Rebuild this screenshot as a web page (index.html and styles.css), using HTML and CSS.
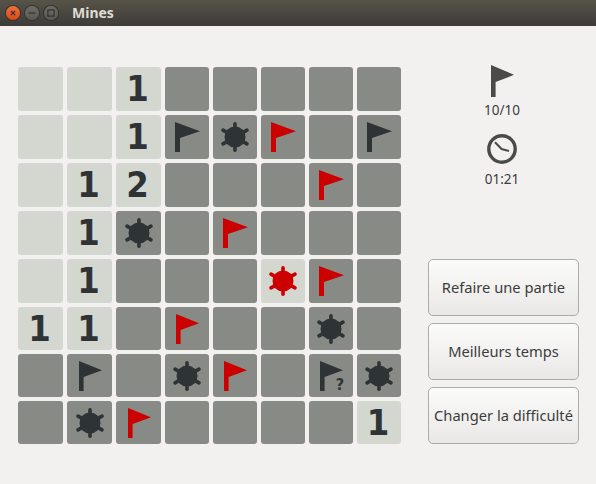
FILE: index.html
```html
<!DOCTYPE html>
<html lang="fr">
<head>
<meta charset="utf-8">
<title>Mines</title>
<link rel="stylesheet" href="styles.css">
</head>
<body>
<svg class="defs" width="0" height="0" aria-hidden="true">
  <symbol id="flag" viewBox="0 0 25 30" preserveAspectRatio="none"><path d="M0 0 L25 9.2 L5 16 L5 30 L0 30 Z"/></symbol>
  <symbol id="mine" viewBox="-15 -15 30 30">
    <circle r="10.5"/>
    <g class="spikes">
      <path d="M0 -13.2 V13.2"/><path d="M-12 -6.9 L12 6.9"/><path d="M-12 6.9 L12 -6.9"/>
    </g>
  </symbol>
</svg>
<header class="titlebar">
  <span class="wb wb-close"><svg viewBox="0 0 16 16"><path d="M5.5 5.5 L10.5 10.5 M10.5 5.5 L5.5 10.5"/></svg></span>
  <span class="wb"><svg viewBox="0 0 16 16"><path d="M4 8 H12"/></svg></span>
  <span class="wb"><svg viewBox="0 0 16 16"><rect x="4.5" y="4.5" width="7" height="7"/></svg></span>
  <span class="title">Mines</span>
</header>
<main class="content">
  <section class="board">
    <div class="cell open"></div><div class="cell open"></div><div class="cell open">1</div><div class="cell"></div><div class="cell"></div><div class="cell"></div><div class="cell"></div><div class="cell"></div>

    <div class="cell open"></div><div class="cell open"></div><div class="cell open">1</div>
    <div class="cell"><svg class="ic-flag"><use href="#flag"/></svg></div>
    <div class="cell"><svg class="ic-mine"><use href="#mine"/></svg></div>
    <div class="cell red"><svg class="ic-flag"><use href="#flag"/></svg></div>
    <div class="cell"></div>
    <div class="cell"><svg class="ic-flag"><use href="#flag"/></svg></div>

    <div class="cell open"></div><div class="cell open">1</div><div class="cell open">2</div><div class="cell"></div><div class="cell"></div><div class="cell"></div>
    <div class="cell red"><svg class="ic-flag"><use href="#flag"/></svg></div>
    <div class="cell"></div>

    <div class="cell open"></div><div class="cell open">1</div>
    <div class="cell"><svg class="ic-mine"><use href="#mine"/></svg></div>
    <div class="cell"></div>
    <div class="cell red"><svg class="ic-flag"><use href="#flag"/></svg></div>
    <div class="cell"></div><div class="cell"></div><div class="cell"></div>

    <div class="cell open"></div><div class="cell open">1</div><div class="cell"></div><div class="cell"></div><div class="cell"></div>
    <div class="cell open red"><svg class="ic-mine"><use href="#mine"/></svg></div>
    <div class="cell red"><svg class="ic-flag"><use href="#flag"/></svg></div>
    <div class="cell"></div>

    <div class="cell open">1</div><div class="cell open">1</div><div class="cell"></div>
    <div class="cell red"><svg class="ic-flag small"><use href="#flag"/></svg></div>
    <div class="cell"></div><div class="cell"></div>
    <div class="cell"><svg class="ic-mine"><use href="#mine"/></svg></div>
    <div class="cell"></div>

    <div class="cell"></div>
    <div class="cell"><svg class="ic-flag small"><use href="#flag"/></svg></div>
    <div class="cell"></div>
    <div class="cell"><svg class="ic-mine"><use href="#mine"/></svg></div>
    <div class="cell red"><svg class="ic-flag small"><use href="#flag"/></svg></div>
    <div class="cell"></div>
    <div class="cell"><svg class="ic-flag small"><use href="#flag"/></svg><span class="maybe">?</span></div>
    <div class="cell"><svg class="ic-mine"><use href="#mine"/></svg></div>

    <div class="cell"></div>
    <div class="cell"><svg class="ic-mine"><use href="#mine"/></svg></div>
    <div class="cell red"><svg class="ic-flag small"><use href="#flag"/></svg></div>
    <div class="cell"></div><div class="cell"></div><div class="cell"></div><div class="cell"></div>
    <div class="cell open">1</div>
  </section>
  <aside class="side">
    <div class="stats">
      <svg class="stat-flag"><use href="#flag"/></svg>
      <div class="stat-text">10/10</div>
      <svg class="stat-clock" viewBox="0 0 30 30">
        <circle cx="15" cy="15" r="13.2"/>
        <path d="M8 8.3 L14.6 15 L22 17"/>
      </svg>
      <div class="stat-text">01:21</div>
    </div>
    <div class="actions">
      <button class="btn">Refaire une partie</button>
      <button class="btn">Meilleurs temps</button>
      <button class="btn">Changer la difficulté</button>
    </div>
  </aside>
</main>
</body>
</html>
```
FILE: styles.css
```css
html, body {
  margin: 0;
  padding: 0;
  height: 100%;
}
body {
  background: #f2f1ef;
  font-family: "Noto Sans", "Liberation Sans", sans-serif;
  overflow: hidden;
}
.defs {
  position: absolute;
}
.titlebar {
  height: 26px;
  box-sizing: border-box;
  display: flex;
  align-items: center;
  padding: 0 0 1px 6px;
  gap: 5px;
  background: linear-gradient(#575349, #3c3b36);
}
.wb {
  width: 14px;
  height: 14px;
  border-radius: 50%;
  background: linear-gradient(#6e6c66, #5b5954);
  box-shadow: 0 0 0 1px #35332f;
  display: block;
}
.wb svg {
  display: block;
  width: 14px;
  height: 14px;
  fill: none;
  stroke: #2f2e2a;
  stroke-width: 1.3;
}
.wb-close {
  background: linear-gradient(#f0703f, #dd4814);
}
.title {
  margin-left: 9px;
  font: bold 14px "Noto Sans", sans-serif;
  color: #dfdbd2;
}
.content {
  display: flex;
  gap: 27px;
  padding: 41px 17px 0 18px;
}
.board {
  display: grid;
  grid-template-columns: repeat(3, 45px) repeat(5, 44px);
  grid-template-rows: repeat(5, 44px) repeat(3, 43px);
  gap: 4px;
  flex: none;
}
.cell {
  position: relative;
  background: #888a85;
  border-radius: 3px;
  color: #2e3436;
  fill: #2e3436;
  stroke: #2e3436;
  font-family: "DejaVu Sans", sans-serif;
  font-weight: bold;
  font-size: 36px;
  font-stretch: condensed;
  line-height: 44px;
  display: flex;
  align-items: center;
  justify-content: center;
}
.open {
  background: #d3d7cf;
  padding-right: 2px;
}
.open.red {
  padding-right: 0;
}
.red {
  fill: #cc0000;
  stroke: #cc0000;
}
.ic-flag {
  width: 25px;
  height: 30px;
  stroke: none;
  margin-left: 1px;
}
.ic-flag.small {
  width: 23px;
}
.ic-mine {
  width: 30px;
  height: 30px;
}
.spikes path {
  stroke-width: 3.6;
  stroke-linecap: round;
  fill: none;
}
#mine circle {
  stroke: none;
}
.maybe {
  position: absolute;
  right: 9px;
  bottom: 4px;
  font: bold 16px/16px "DejaVu Sans", sans-serif;
  font-stretch: condensed;
}
.side {
  width: 151px;
  height: 377px;
  display: flex;
  flex-direction: column;
  justify-content: space-between;
}
.stats {
  display: flex;
  flex-direction: column;
  align-items: center;
  padding-right: 3px;
}
.stat-flag {
  width: 23px;
  height: 32px;
  margin-top: -2px;
  fill: #4a4a48;
}
.stat-text {
  font-size: 13.5px;
  line-height: 18px;
  color: #3c3c3c;
  margin-top: 4px;
}
.stat-clock {
  width: 30px;
  height: 30px;
  margin-top: 15px;
  fill: none;
  stroke: #4a4a48;
  stroke-width: 3.4;
}
.stat-clock path {
  stroke-width: 2;
}
.stat-clock + .stat-text {
  margin-top: 6px;
}
.actions {
  display: flex;
  flex-direction: column;
  gap: 7px;
}
.btn {
  height: 57px;
  width: 151px;
  padding: 0 0 2px;
  border: 1px solid #aeaca8;
  border-radius: 5px;
  background: linear-gradient(#fbfbfa, #e9e8e6);
  font: 14.7px "Noto Sans", sans-serif;
  color: #3c3c3c;
}
```
